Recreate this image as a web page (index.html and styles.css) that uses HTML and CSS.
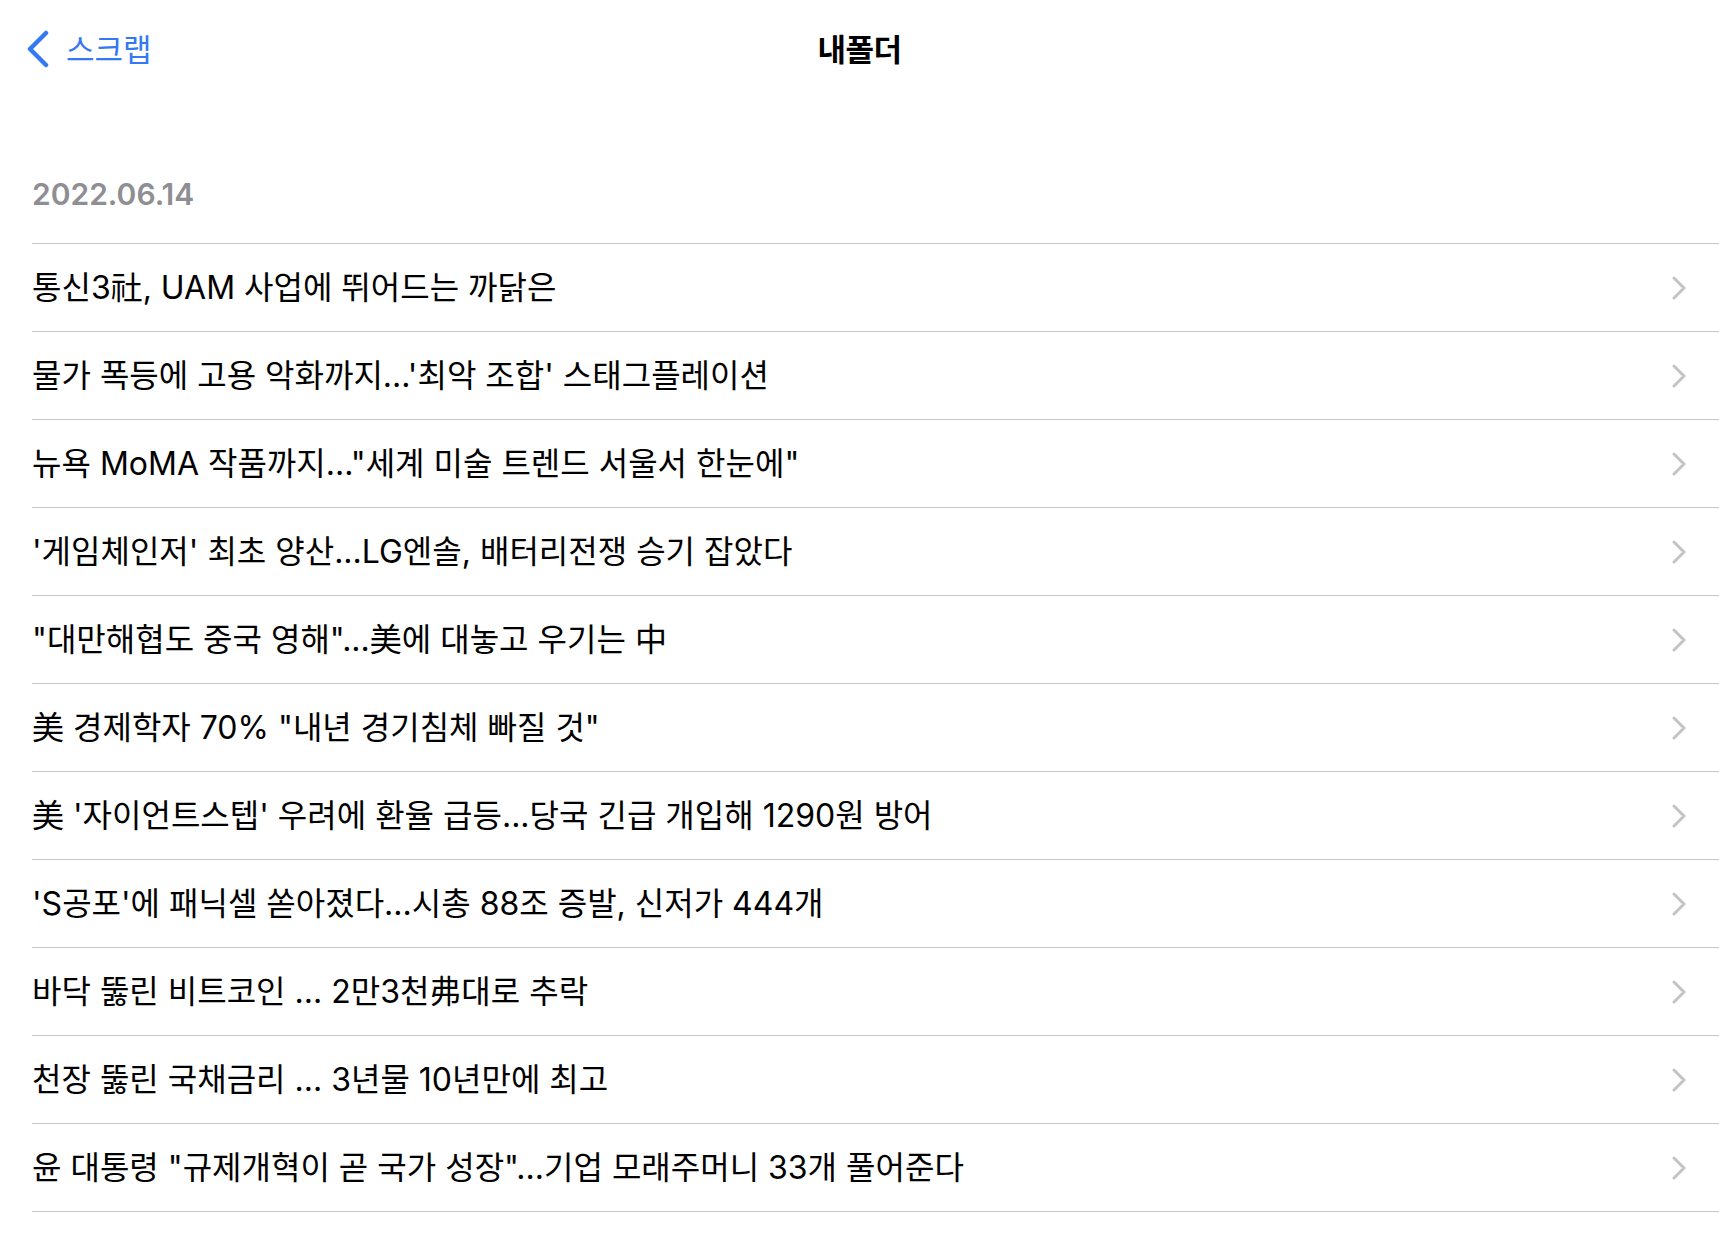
FILE: index.html
```html
<!DOCTYPE html>
<html lang="ko">
<head>
  <meta charset="UTF-8" />
  <meta name="viewport" content="width=device-width, initial-scale=1.0" />
  <title>내폴더</title>
  <link rel="stylesheet" href="styles.css">
</head>
<body>

  <header class="navbar">
    <a class="back" href="#">
      <svg class="back-icon" width="24" height="38" viewBox="0 0 24 38">
        <path d="M20 3 L4 19 L20 35" fill="none" stroke="#3478f6" stroke-width="4.5" stroke-linecap="round" stroke-linejoin="round"/>
      </svg>
      <span>스크랩</span>
    </a>
    <h1 class="title">내폴더</h1>
    <div></div>
  </header>

  <section class="folder">
    <div class="date">2022.06.14</div>
    <ul class="list">
      <li class="row"><span class="row-text">통신3社, UAM 사업에 뛰어드는 까닭은</span><svg class="chev" width="14" height="24" viewBox="0 0 14 24"><path d="M2 2 L12 12 L2 22" /></svg></li>
      <li class="row"><span class="row-text">물가 폭등에 고용 악화까지...'최악 조합' 스태그플레이션</span><svg class="chev" width="14" height="24" viewBox="0 0 14 24"><path d="M2 2 L12 12 L2 22" /></svg></li>
      <li class="row"><span class="row-text">뉴욕 MoMA 작품까지..."세계 미술 트렌드 서울서 한눈에"</span><svg class="chev" width="14" height="24" viewBox="0 0 14 24"><path d="M2 2 L12 12 L2 22" /></svg></li>
      <li class="row"><span class="row-text">'게임체인저' 최초 양산...LG엔솔, 배터리전쟁 승기 잡았다</span><svg class="chev" width="14" height="24" viewBox="0 0 14 24"><path d="M2 2 L12 12 L2 22" /></svg></li>
      <li class="row"><span class="row-text">"대만해협도 중국 영해"...美에 대놓고 우기는 中</span><svg class="chev" width="14" height="24" viewBox="0 0 14 24"><path d="M2 2 L12 12 L2 22" /></svg></li>
      <li class="row"><span class="row-text">美 경제학자 70% "내년 경기침체 빠질 것"</span><svg class="chev" width="14" height="24" viewBox="0 0 14 24"><path d="M2 2 L12 12 L2 22" /></svg></li>
      <li class="row"><span class="row-text">美 '자이언트스텝' 우려에 환율 급등...당국 긴급 개입해 1290원 방어</span><svg class="chev" width="14" height="24" viewBox="0 0 14 24"><path d="M2 2 L12 12 L2 22" /></svg></li>
      <li class="row"><span class="row-text">'S공포'에 패닉셀 쏟아졌다...시총 88조 증발, 신저가 444개</span><svg class="chev" width="14" height="24" viewBox="0 0 14 24"><path d="M2 2 L12 12 L2 22" /></svg></li>
      <li class="row"><span class="row-text">바닥 뚫린 비트코인 ... 2만3천弗대로 추락</span><svg class="chev" width="14" height="24" viewBox="0 0 14 24"><path d="M2 2 L12 12 L2 22" /></svg></li>
      <li class="row"><span class="row-text">천장 뚫린 국채금리 ... 3년물 10년만에 최고</span><svg class="chev" width="14" height="24" viewBox="0 0 14 24"><path d="M2 2 L12 12 L2 22" /></svg></li>
      <li class="row"><span class="row-text">윤 대통령 "규제개혁이 곧 국가 성장"...기업 모래주머니 33개 풀어준다</span><svg class="chev" width="14" height="24" viewBox="0 0 14 24"><path d="M2 2 L12 12 L2 22" /></svg></li>
    </ul>
  </section>

</body>
</html>
```

FILE: styles.css
```css
body {
  margin: 0;
  font-family: Inter, "Noto Sans CJK KR", sans-serif;
  background-color: #ffffff;
  color: #000000;
}
.navbar {
  height: 94px;
  padding-bottom: 6px;
  display: grid;
  grid-template-columns: 1fr auto 1fr;
  align-items: center;
}
.back {
  display: flex;
  align-items: center;
  gap: 16px;
  padding-left: 26px;
  color: #3478f6;
  text-decoration: none;
  font-size: 31px;
}
.back-icon {
  display: block;
  margin-top: 4px;
}
.title {
  margin: 0;
  font-size: 31px;
  font-weight: 700;
  letter-spacing: -0.5px;
}
.folder {
  padding-left: 32px;
}
.date {
  padding: 80px 0 35px;
  line-height: 28px;
  font-size: 30px;
  font-weight: 600;
  color: #8e8e93;
}
.list {
  list-style: none;
  margin: 0;
  padding: 0;
  border-bottom: 1px solid #c6c6c8;
}
.row {
  height: 87px;
  border-top: 1px solid #c6c6c8;
  display: flex;
  align-items: center;
  justify-content: space-between;
  padding-right: 33px;
  font-size: 32px;
}
.row-text {
  margin-bottom: 6px;
}
.chev path {
  fill: none;
  stroke: #c4c4c7;
  stroke-width: 3;
  stroke-linecap: round;
  stroke-linejoin: round;
}
```
